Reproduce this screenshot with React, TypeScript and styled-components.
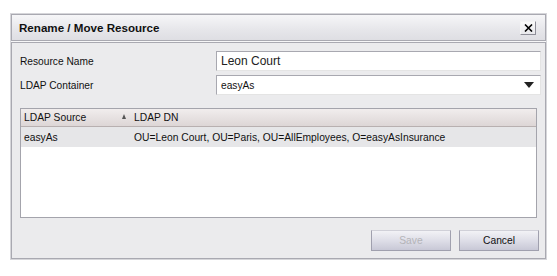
import styled, { createGlobalStyle } from 'styled-components';

const GlobalStyle = createGlobalStyle`
  html, body {
    margin: 0;
    padding: 0;
    background: #fff;
    font-family: "Liberation Sans", Arial, sans-serif;
  }
`;

const Page = styled.div`
  padding: 13px 0 0 10px;
`;

const Dialog = styled.div`
  width: 535px;
  border: 1px solid #d6d6da;
  background: #f7f7f8;
  display: flex;
  flex-direction: column;
  gap: 1px;
`;

const Header = styled.div`
  height: 25px;
  border: 1px solid #a9a9b1;
  background: linear-gradient(#f6f6f8, #e6e6ea 60%, #dedee3);
  display: flex;
  align-items: center;
  justify-content: space-between;
  padding: 0 9px 0 7px;
`;

const Title = styled.span`
  font-size: 11.6px;
  font-weight: bold;
  color: #111;
`;

const CloseButton = styled.button`
  width: 16px;
  height: 14px;
  padding: 0;
  border: 1px solid #8e8e98;
  border-top-color: #f4f4f4;
  border-left-color: #f4f4f4;
  background: linear-gradient(#fafafa, #e8e8ec);
  display: flex;
  align-items: center;
  justify-content: center;
`;

const Body = styled.div`
  border: 1px solid #a9a9b1;
  background: #ebebed;
  padding: 8px 4px 7px 8px;
  display: flex;
  flex-direction: column;
`;

const FormRow = styled.div`
  display: grid;
  grid-template-columns: 196px 1fr;
  align-items: center;
  height: 20px;
  margin-bottom: 4px;
`;

const Label = styled.label`
  font-size: 10.2px;
  color: #111;
`;

const TextInput = styled.input`
  box-sizing: border-box;
  height: 20px;
  width: 100%;
  border: 1px solid #a8a8b0;
  border-right-color: #e4e4e4;
  border-bottom-color: #e4e4e4;
  background: #fff;
  padding: 0 4px;
  font-family: "Liberation Sans", Arial, sans-serif;
  font-size: 12px;
  color: #222;
  outline: none;
`;

const Select = styled.div`
  box-sizing: border-box;
  height: 20px;
  border: 1px solid #a8a8b0;
  border-right-color: #e4e4e4;
  border-bottom-color: #e4e4e4;
  background: #fff;
  padding: 0 4px;
  display: flex;
  align-items: center;
  justify-content: space-between;
  font-size: 10.2px;
  color: #111;
`;

const Arrow = styled.span`
  width: 0;
  height: 0;
  border-left: 5px solid transparent;
  border-right: 5px solid transparent;
  border-top: 6px solid #222;
  margin-right: 2px;
`;

const Table = styled.div`
  margin-top: 9px;
  width: 517px;
  height: 110px;
  box-sizing: border-box;
  border: 1px solid #a4a4ac;
  background: #fff;
  display: flex;
  flex-direction: column;
`;

const HeadRow = styled.div`
  display: flex;
  height: 17px;
  align-items: center;
  background: linear-gradient(#f1eded, #ddd6d6);
  border-bottom: 1px solid #b8b0b0;
  font-size: 10.3px;
  color: #111;
`;

const DataRow = styled.div`
  display: flex;
  height: 20px;
  align-items: center;
  background: #e6e6e8;
  font-size: 10.3px;
  color: #111;
`;

const Cell = styled.div<{ $w?: number }>`
  box-sizing: border-box;
  width: ${(p) => (p.$w ? `${p.$w}px` : 'auto')};
  flex: ${(p) => (p.$w ? 'none' : '1')};
  padding-left: 3px;
  display: flex;
  align-items: center;
  justify-content: space-between;
  white-space: nowrap;
`;

const SortMark = styled.span`
  width: 0;
  height: 0;
  border-left: 2px solid transparent;
  border-right: 2px solid transparent;
  border-bottom: 5px solid #555;
  margin-right: 5px;
  margin-bottom: 2px;
`;

const Footer = styled.div`
  display: flex;
  justify-content: flex-end;
  gap: 8px;
  padding-right: 2px;
  margin-top: 12px;
`;

const Button = styled.button<{ $disabled?: boolean }>`
  width: 80px;
  height: 21px;
  border: 1px solid #a0a0ae;
  border-top-color: #d0d0d8;
  background: linear-gradient(#f2f2f6, #dcdce6 55%, #c8c8d6);
  font-family: "Liberation Sans", Arial, sans-serif;
  font-size: 10.3px;
  color: ${(p) => (p.$disabled ? '#b4b4b8' : '#111')};
  padding: 0;
`;

export default function App() {
  return (
    <>
      <GlobalStyle />
      <Page>
        <Dialog>
          <Header>
            <Title>Rename / Move Resource</Title>
            <CloseButton aria-label="Close">
              <svg width="9" height="8" viewBox="0 0 9 8">
                <path d="M1 0.5 L8 7.5 M8 0.5 L1 7.5" stroke="#000" strokeWidth="1.6" />
              </svg>
            </CloseButton>
          </Header>
          <Body>
            <FormRow>
              <Label>Resource Name</Label>
              <TextInput defaultValue="Leon Court" />
            </FormRow>
            <FormRow>
              <Label>LDAP Container</Label>
              <Select>
                <span>easyAs</span>
                <Arrow />
              </Select>
            </FormRow>
            <Table>
              <HeadRow>
                <Cell $w={110}>
                  <span>LDAP Source</span>
                  <SortMark />
                </Cell>
                <Cell>LDAP DN</Cell>
              </HeadRow>
              <DataRow>
                <Cell $w={110}>easyAs</Cell>
                <Cell>OU=Leon Court, OU=Paris, OU=AllEmployees, O=easyAsInsurance</Cell>
              </DataRow>
            </Table>
            <Footer>
              <Button $disabled>Save</Button>
              <Button>Cancel</Button>
            </Footer>
          </Body>
        </Dialog>
      </Page>
    </>
  );
}
